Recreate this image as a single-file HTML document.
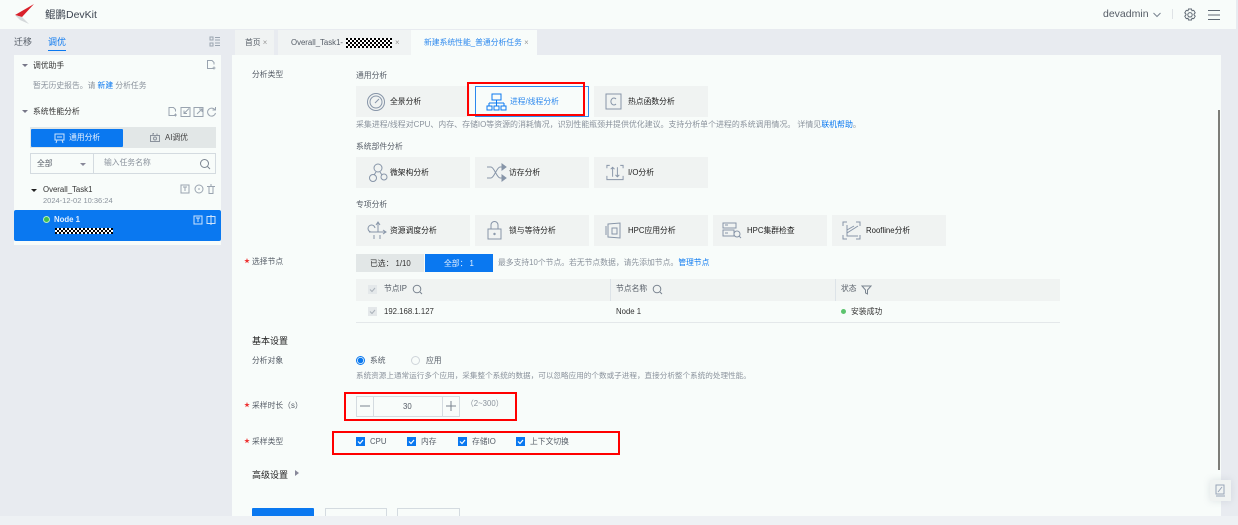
<!DOCTYPE html>
<html lang="zh"><head><meta charset="utf-8"><title>鲲鹏DevKit</title>
<style>
*{box-sizing:border-box}
html,body{margin:0;padding:0}
body{width:1238px;height:525px;overflow:hidden;position:relative;background:#e8ebf0;font-family:"Liberation Sans","Noto Sans CJK SC",sans-serif;font-size:7.8px;color:#222}
#w{position:absolute;left:0;top:0;width:1238px;height:525px;filter:blur(.3px)}
.a{position:absolute;white-space:nowrap}
.t{position:absolute;white-space:nowrap;line-height:12px}
.g{color:#8a929c}.d{color:#555c66}.b{color:#0a78f0}
.card{position:absolute;width:114px;height:31px;background:#f0f3f2;font-size:7.8px;line-height:31px;padding-left:34px;color:#222}
.card svg{position:absolute;left:9px;top:5px;width:21px;height:21px;fill:none;stroke:#8795a8;stroke-width:1}
.red{position:absolute;border:2px solid #f00}
.star{position:absolute;color:#e33;font-size:6px;line-height:12px}
.cb{position:absolute;width:9px;height:9px;background:#0a78f0}
.cb svg{position:absolute;left:0;top:0;width:9px;height:9px}
.cg{position:absolute;width:9px;height:9px;background:#e4e8ea}
.cg svg{position:absolute;left:0;top:0;width:9px;height:9px}
.ic{position:absolute;fill:none;stroke:#9aa4b0;stroke-width:1}
</style></head><body><div id="w">
<div class="a" style="left:0;top:0;width:1236px;height:29px;background:#f8fcfa"></div>
<svg class="a" style="left:14px;top:3px" width="22" height="22" viewBox="0 0 22 22"><path d="M1 12L20 1L8 14z" fill="#d9202a"/><path d="M1 12L8 14L15 21L6 17z" fill="#d4d8da"/></svg>
<div class="t" style="left:45px;top:8px;font-size:10.5px;color:#3c4450;line-height:14px">鲲鹏DevKit</div>
<div class="t d" style="left:1103px;top:8px;font-size:10.5px;line-height:13px">devadmin</div>
<svg class="ic" style="left:1153px;top:12px;stroke:#7a8490" width="8" height="6"><path d="M.5 1l3.500 3.500L7.500 1"/></svg>
<div class="a" style="left:1172px;top:9px;width:1px;height:10px;background:#dfe3e6"></div>
<svg class="ic" style="left:1183px;top:8px;stroke:#5f6974" width="14" height="14" viewBox="0 0 14 14"><path d="M5.500 1h3l.5 1.800 1.700-.5 1.500 2.500-1.200 1.400 0 .6 1.200 1.400-1.500 2.500-1.700-.5-.5 1.800h-3l-.5-1.800-1.700.5L1.800 8.200 3 6.800v-.6L1.800 4.800l1.500-2.500 1.700.5z"/><circle cx="7" cy="6.800" r="2.200"/></svg>
<svg class="ic" style="left:1207px;top:9px;stroke:#5f6974" width="14" height="12"><path d="M1 1.500h12M1 6h12M1 10.500h12"/></svg>

<!-- left nav -->
<div class="t d" style="left:14px;top:36px;font-size:9px">迁移</div>
<div class="t b" style="left:48px;top:36px;font-size:9px">调优</div>
<div class="a" style="left:48px;top:50px;width:18px;height:1px;background:#0a78f0"></div>
<svg class="ic" style="left:209px;top:36px" width="12" height="11"><path d="M1 1h3v3H1zM1 7h3v3H1zM6 1.500h5M6 4h5M6 7h5M6 9.500h5"/></svg>
<div class="a" style="left:14px;top:55px;width:207px;height:190px;background:#f8fcfa"></div>
<div class="a" style="left:22px;top:64px;border:3px solid transparent;border-top:3px solid #778;"></div>
<div class="t" style="left:33px;top:60px;color:#333">调优助手</div>
<svg class="ic" style="left:206px;top:59px" width="10" height="11"><path d="M7.500 9.500H1.500v-8h4.500l2 2v2M8 7.500v3M6.500 9h3"/></svg>
<div class="t g" style="left:33px;top:80px">暂无历史报告。请 <span class="b">新建</span> 分析任务</div>
<div class="a" style="left:22px;top:110px;border:3px solid transparent;border-top:3px solid #778;"></div>
<div class="t" style="left:33px;top:106px;color:#333">系统性能分析</div>
<svg class="ic" style="left:167px;top:106px" width="50" height="11"><path d="M8 9.500H2v-8h4.500l2 2v2M8.500 7.500v3M7 9h3M14 1.500h9v9h-9zM22 2.500l-5 5M17 4.500v3h3M27 1.500h9v9h-9zM30 8l5-5M32 3h3v3M48 4a4 4 0 1 0 .5 3M48.500 1v3h-3"/></svg>
<div class="a" style="left:30px;top:127px;width:186px;height:21px;background:#e2e7e7"></div>
<div class="a" style="left:31px;top:129px;width:92px;height:18px;background:#0a78f0;border-radius:1px"></div>
<svg class="ic" style="left:54px;top:133px;stroke:#cfe3fb" width="11" height="11"><path d="M1 1h9v6H1zM3 7l-1 3M8 7l1 3M3 4h5"/></svg>
<div class="t" style="left:69px;top:132px;color:#e6f1fe">通用分析</div>
<svg class="ic" style="left:149px;top:132px;stroke:#8a929c" width="12" height="11"><path d="M1.500 3.500h9v6h-9zM4 3.500v-2h1M8 3.500v-2"/><circle cx="6" cy="6.500" r="1.500"/></svg>
<div class="t" style="left:165px;top:132px;color:#444">AI调优</div>
<div class="a" style="left:30px;top:153px;width:186px;height:21px;border:1px solid #d4dbe0;background:#f8fcfa"></div>
<div class="a" style="left:93px;top:153px;width:1px;height:21px;background:#d4dbe0"></div>
<div class="t d" style="left:37px;top:158px">全部</div>
<div class="a" style="left:80px;top:163px;border:3px solid transparent;border-top:3px solid #889"></div>
<div class="t g" style="left:104px;top:157px">输入任务名称</div>
<svg class="ic" style="left:199px;top:158px;stroke:#7a8490" width="12" height="12"><circle cx="5.500" cy="5.500" r="4"/><path d="M8.500 8.500l2.500 2.500"/></svg>
<div class="a" style="left:31px;top:189px;border:3px solid transparent;border-top:3px solid #222"></div>
<div class="t" style="left:43px;top:184px;color:#333">Overall_Task1</div>
<div class="t g" style="left:43px;top:195px;font-size:7.500px">2024-12-02 10:36:24</div>
<svg class="ic" style="left:180px;top:184px" width="36" height="11"><path d="M1 1h8v8H1zM3 3h4M5 3v4M15 5a4 4 0 1 1 8 0 4 4 0 1 1-8 0M18 5h2M27 2.500h8M29 2.500v7h4v-7M30 1h2"/></svg>
<div class="a" style="left:14px;top:210px;width:207px;height:31px;background:#0a78f0;border-radius:2px"></div>
<div class="a" style="left:43px;top:216px;width:7px;height:7px;border-radius:50%;background:#3fbf4d;border:1px solid #b8ecc0"></div>
<div class="t" style="left:54px;top:214px;color:#e0eefe;font-weight:bold">Node 1</div>
<svg class="ic" style="left:193px;top:215px;stroke:#cfe3fb" width="24" height="11"><path d="M1 1h8v8H1zM3 3h4M5 3v4M14 1.500h8v7h-8zM18 0v10"/></svg>
<svg class="a" style="left:55px;top:228px" width="58" height="6"><defs><pattern id="c" width="4" height="4" patternUnits="userSpaceOnUse"><rect width="4" height="4" fill="#fff"/><rect width="2" height="2" fill="#000"/><rect x="2" y="2" width="2" height="2" fill="#000"/></pattern></defs><rect width="58" height="6" fill="url(#c)"/></svg>

<!-- tabs -->
<div class="a" style="left:232px;top:29px;width:989px;height:26px;background:#e8ebf0"></div>
<div class="a" style="left:235px;top:30px;width:39px;height:25px;background:#f0f3f3"></div>
<div class="t d" style="left:245px;top:37px">首页 <span style="color:#999">×</span></div>
<div class="a" style="left:278px;top:30px;width:133px;height:25px;background:#f0f3f3"></div>
<div class="t d" style="left:291px;top:37px">Overall_Task1-</div>
<svg class="a" style="left:346px;top:38px" width="46" height="10"><rect width="46" height="10" fill="url(#c)"/></svg>
<div class="t" style="left:395px;top:37px;color:#999">×</div>
<div class="a" style="left:411px;top:30px;width:126px;height:25px;background:#f8fcfa"></div>
<div class="t b" style="left:424px;top:37px;color:#2b88ee">新建系统性能_普通分析任务 <span style="color:#999">×</span></div>

<!-- main -->
<div class="a" style="left:232px;top:55px;width:989px;height:461px;background:#f8fcfa"></div>
<div class="a" style="left:1218px;top:110px;width:2px;height:360px;background:#7d7d78"></div>
<div class="a" style="left:0;top:516px;width:1238px;height:9px;background:#eef1f4"></div>

<div class="t d" style="left:252px;top:69px">分析类型</div>
<div class="t d" style="left:356px;top:70px">通用分析</div>
<div class="card" style="left:356px;top:86px">全景分析<svg viewBox="0 0 21 21"><circle cx="11" cy="11" r="8.500"/><circle cx="11" cy="11" r="6"/><path d="M10 12l4-4"/></svg></div>
<div class="card" style="left:475px;top:86px;background:#f8fcfa;border:1px solid #2b88ee;color:#2b88ee;line-height:29px;padding-left:34px">进程/线程分析<svg style="left:10px;top:5px;stroke:#0a78f0" viewBox="0 0 21 21"><path d="M6 2h9v6H6zM10.500 8v3M3 11h15M3 11v3M10.500 11v3M18 11v3M1 14h5v4H1zM8 14h5v4H8zM15 14h5v4h-5z"/></svg></div>
<div class="card" style="left:594px;top:86px">热点函数分析<svg viewBox="0 0 21 21"><path d="M3 3h15v15H3z"/><path d="M13 8a3 3.500 0 1 0 0 5"/></svg></div>
<div class="t g" style="left:356px;top:119px;font-size:7.93px">采集进程/线程对CPU、内存、存储IO等资源的消耗情况，识别性能瓶颈并提供优化建议。支持分析单个进程的系统调用情况。 详情见<span class="b">联机帮助</span>。</div>
<div class="t d" style="left:356px;top:141px">系统部件分析</div>
<div class="card" style="left:356px;top:157px">微架构分析<svg style="left:12px" viewBox="0 0 21 21"><circle cx="10" cy="6" r="4"/><circle cx="5" cy="16" r="3.500"/><circle cx="16" cy="15" r="3"/><path d="M8 10l-2 3M12 10l2 3"/></svg></div>
<div class="card" style="left:475px;top:157px">访存分析<svg style="left:11px" viewBox="0 0 21 21"><path d="M1 5h4c3 0 6 11 9 11h3M1 16h4c3 0 6-11 9-11h3"/><path d="M16 2l4 3-4 3zM16 13l4 3-4 3z" fill="#8795a8"/></svg></div>
<div class="card" style="left:594px;top:157px">I/O分析<svg style="left:11px;width:20px" viewBox="0 0 21 21"><path d="M5 3H2v3M16 3h3v3M2 14v4h17v-4M8 5v10M13 5v10"/><path d="M6 7l2-2 2 2M11 13l2 2 2-2"/></svg></div>
<div class="t d" style="left:356px;top:199px">专项分析</div>
<div class="card" style="left:356px;top:215px">资源调度分析<svg style="left:11px" viewBox="0 0 21 21"><path d="M9 12H4a3.500 3.500 0 1 1 4-4M2 12h16M16 10l3 2-3 2M11 12V3M9 5l2-3 2 3M7 15v4M13 15v4"/></svg></div>
<div class="card" style="left:475px;top:215px">锁与等待分析<svg style="left:9px" viewBox="0 0 21 21"><path d="M4 9h13v10H4zM7 9V5a3.500 3.500 0 0 1 7 0v4"/><circle cx="10.500" cy="14" r=".7"/></svg></div>
<div class="card" style="left:594px;top:215px">HPC应用分析<svg viewBox="0 0 21 21"><path d="M5 4l12-1v15l-12-1zM3 6v9M9 8h5v6H9z"/></svg></div>
<div class="card" style="left:713px;top:215px">HPC集群检查<svg style="left:8px" viewBox="0 0 21 21"><path d="M2 3h13v5H2zM2 10h11v6H2zM4 5h3M4 13h3"/><circle cx="16" cy="14" r="3"/><path d="M18 16l2 2"/></svg></div>
<div class="card" style="left:832px;top:215px">Roofline分析<svg viewBox="0 0 21 21"><path d="M6 2H2v4M15 2h4v4M2 15v4h4M19 15v4h-4M6 5v11h11M6 13l11-7M6 10l7-4"/></svg></div>

<div class="star" style="left:244px;top:256px">★</div>
<div class="t d" style="left:252px;top:256px">选择节点</div>
<div class="a" style="left:356px;top:254px;width:68px;height:18px;background:#e2e7e7"></div>
<div class="t" style="left:370px;top:258px;color:#333">已选： 1/10</div>
<div class="a" style="left:425px;top:254px;width:68px;height:18px;background:#0a78f0"></div>
<div class="t" style="left:444px;top:258px;color:#e6f1fe">全部： 1</div>
<div class="t g" style="left:498px;top:257px">最多支持10个节点。若无节点数据，请先添加节点。<span class="b">管理节点</span></div>

<div class="a" style="left:356px;top:279px;width:704px;height:22px;background:#f0f3f2"></div>
<div class="a" style="left:610px;top:279px;width:1px;height:22px;background:#dde3e8"></div>
<div class="a" style="left:835px;top:279px;width:1px;height:22px;background:#dde3e8"></div>
<div class="cg" style="left:368px;top:285px"><svg viewBox="0 0 9 9"><path d="M2 4.500l2 2 3-3.500" fill="none" stroke="#aab2ba" stroke-width="1"/></svg></div>
<div class="t d" style="left:384px;top:283px">节点IP</div>
<svg class="ic" style="left:412px;top:284px;stroke:#7a8490" width="11" height="11"><circle cx="5" cy="5" r="3.800"/><path d="M8 8l2 2"/></svg>
<div class="t d" style="left:616px;top:283px">节点名称</div>
<svg class="ic" style="left:652px;top:284px;stroke:#7a8490" width="11" height="11"><circle cx="5" cy="5" r="3.800"/><path d="M8 8l2 2"/></svg>
<div class="t d" style="left:841px;top:283px">状态</div>
<svg class="ic" style="left:861px;top:285px;stroke:#7a8490" width="11" height="10"><path d="M1 1h9L6.500 5v4l-2-1V5z"/></svg>
<div class="cg" style="left:368px;top:307px"><svg viewBox="0 0 9 9"><path d="M2 4.500l2 2 3-3.500" fill="none" stroke="#aab2ba" stroke-width="1"/></svg></div>
<div class="t" style="left:384px;top:306px;color:#333">192.168.1.127</div>
<div class="t" style="left:616px;top:306px;color:#333">Node 1</div>
<div class="a" style="left:841px;top:309px;width:5px;height:5px;border-radius:50%;background:#5cc46e"></div>
<div class="t" style="left:851px;top:306px;color:#333">安装成功</div>
<div class="a" style="left:356px;top:322px;width:704px;height:1px;background:#e4e8ea"></div>

<div class="t" style="left:252px;top:335px;font-size:9px;color:#222">基本设置</div>
<div class="t d" style="left:252px;top:355px">分析对象</div>
<div class="a" style="left:356px;top:356px;width:9px;height:9px;border-radius:50%;border:1px solid #0a78f0;background:radial-gradient(circle,#0a78f0 2.500px,#f8fcfa 3px)"></div>
<div class="t d" style="left:370px;top:355px">系统</div>
<div class="a" style="left:411px;top:356px;width:9px;height:9px;border-radius:50%;border:1px solid #cfd5da"></div>
<div class="t d" style="left:426px;top:355px">应用</div>
<div class="t g" style="left:356px;top:370px;font-size:7.6px">系统资源上通常运行多个应用，采集整个系统的数据，可以忽略应用的个数或子进程，直接分析整个系统的处理性能。</div>

<div class="star" style="left:244px;top:400px">★</div>
<div class="t d" style="left:252px;top:400px">采样时长（s）</div>
<div class="a" style="left:356px;top:396px;width:104px;height:21px;border:1px solid #d4dbe0"></div>
<div class="a" style="left:373px;top:396px;width:1px;height:21px;background:#d4dbe0"></div>
<div class="a" style="left:442px;top:396px;width:1px;height:21px;background:#d4dbe0"></div>
<svg class="ic" style="left:359px;top:400px;stroke:#7a8490" width="12" height="12"><path d="M1 6h10"/></svg>
<svg class="ic" style="left:445px;top:400px;stroke:#7a8490" width="12" height="12"><path d="M1 6h10M6 1v10"/></svg>
<div class="t d" style="left:403px;top:401px">30</div>
<div class="t g" style="left:466px;top:398px">（2~300）</div>

<div class="star" style="left:244px;top:436px">★</div>
<div class="t d" style="left:252px;top:436px">采样类型</div>
<div class="cb" style="left:356px;top:437px"><svg viewBox="0 0 9 9"><path d="M2 4.500l2 2 3-3.500" fill="none" stroke="#fff" stroke-width="1.200"/></svg></div>
<div class="t d" style="left:370px;top:436px">CPU</div>
<div class="cb" style="left:407px;top:437px"><svg viewBox="0 0 9 9"><path d="M2 4.500l2 2 3-3.500" fill="none" stroke="#fff" stroke-width="1.200"/></svg></div>
<div class="t d" style="left:421px;top:436px">内存</div>
<div class="cb" style="left:458px;top:437px"><svg viewBox="0 0 9 9"><path d="M2 4.500l2 2 3-3.500" fill="none" stroke="#fff" stroke-width="1.200"/></svg></div>
<div class="t d" style="left:472px;top:436px">存储IO</div>
<div class="cb" style="left:516px;top:437px"><svg viewBox="0 0 9 9"><path d="M2 4.500l2 2 3-3.500" fill="none" stroke="#fff" stroke-width="1.200"/></svg></div>
<div class="t d" style="left:530px;top:436px">上下文切换</div>
<div class="t" style="left:252px;top:469px;font-size:9px;color:#222">高级设置</div>
<div class="a" style="left:295px;top:470px;border:3.500px solid transparent;border-left:4px solid #889"></div>

<div class="a" style="left:252px;top:508px;width:62px;height:8px;background:#0a78f0;border-radius:1px 1px 0 0"></div>
<div class="a" style="left:325px;top:508px;width:62px;height:8px;border:1px solid #d4dbe0;border-bottom:0"></div>
<div class="a" style="left:397px;top:508px;width:63px;height:8px;border:1px solid #d4dbe0;border-bottom:0"></div>

<div class="red" style="left:467px;top:82px;width:118px;height:34px"></div>
<div class="red" style="left:344px;top:392px;width:173px;height:29px"></div>
<div class="red" style="left:332px;top:431px;width:288px;height:24px"></div>

<div class="a" style="left:1210px;top:480px;width:21px;height:21px;background:#f0f3f2;box-shadow:0 0 8px rgba(120,130,150,.2)"></div>
<svg class="ic" style="left:1215px;top:484px;stroke:#98a4b8" width="11" height="13"><path d="M1 1h8v9H1zM1 12h9M3 8l4-5"/></svg>
</div></body></html>
